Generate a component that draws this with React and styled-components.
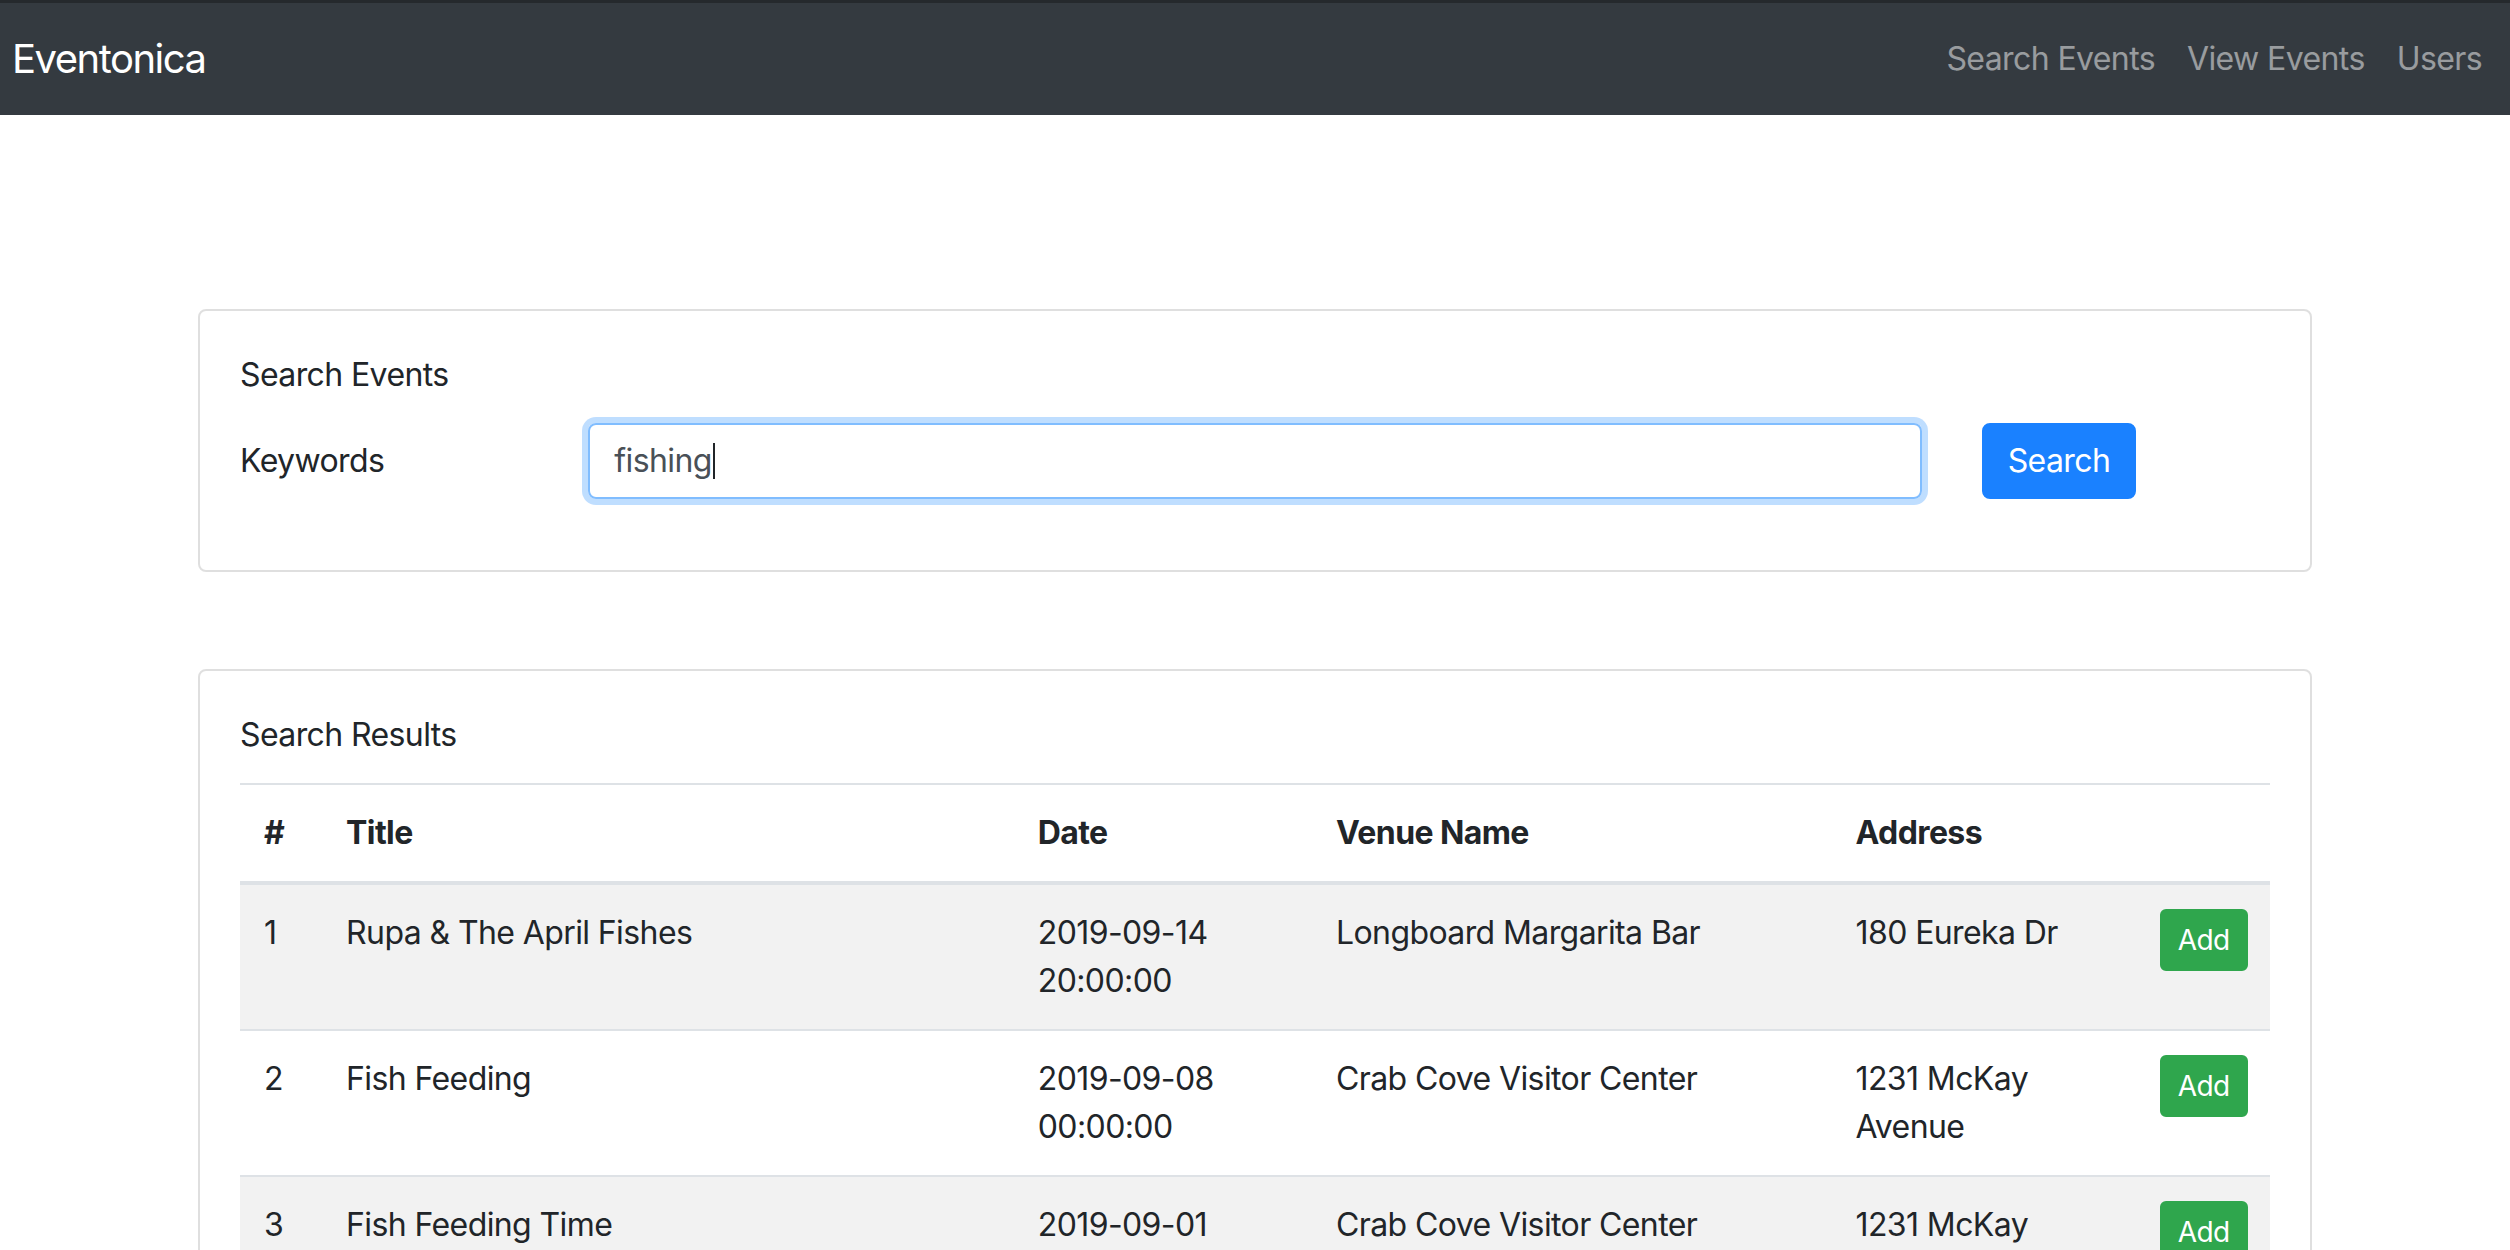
import { styled, createGlobalStyle } from 'styled-components';

const GlobalStyle = createGlobalStyle`
  * { box-sizing: border-box; }
  body {
    margin: 0;
    font-family: Inter, "Noto Sans", "Liberation Sans", sans-serif;
    font-size: 32px;
    line-height: 48px;
    letter-spacing: -0.6px;
    color: #212529;
    background: #fff;
  }
`

const Navbar = styled.nav`
  display: flex;
  align-items: center;
  justify-content: space-between;
  height: 115px;
  padding: 0 12px;
  background: #343a40;
  border-top: 3px solid #25292d;
`
const Brand = styled.a`
  color: #fff;
  font-size: 40px;
  line-height: 60px;
  letter-spacing: -1.5px;
  text-decoration: none;
`
const NavLinks = styled.div`
  display: flex;
`
const NavLink = styled.a`
  padding: 0 16px;
  color: rgba(255, 255, 255, 0.5);
  text-decoration: none;
  white-space: nowrap;
`

const Main = styled.main`
  width: 2114px;
  margin: 194px auto 0;
`
const Card = styled.section`
  border: 2px solid rgba(0, 0, 0, 0.125);
  border-radius: 8px;
  padding: 40px;
  margin-bottom: 97px;
`
const CardTitle = styled.h5`
  margin: 0 0 24px;
  font-size: 32px;
  font-weight: 400;
  line-height: 48px;
`

const FormRow = styled.div`
  display: flex;
  align-items: center;
  margin: 0 -30px 31px;
`
const Col = styled.div`
  flex: 0 0 ${p => p.$span / 12 * 100}%;
  padding: 0 30px;
`
const Label = styled.label`
  display: block;
`
const Field = styled.div`
  display: flex;
  align-items: center;
  height: 76px;
  padding: 0 24px;
  border: 2px solid #80bdff;
  border-radius: 8px;
  color: #495057;
  box-shadow: 0 0 0 6px rgba(0, 123, 255, 0.25);
`
const Caret = styled.span`
  display: inline-block;
  width: 2px;
  height: 36px;
  margin-left: 1px;
  background: #212529;
`
const Button = styled.button`
  font-family: inherit;
  letter-spacing: inherit;
  color: #fff;
  border: 2px solid ${p => p.$bg};
  background: ${p => p.$bg};
  border-radius: ${p => (p.$small ? '6px' : '8px')};
  font-size: ${p => (p.$small ? '28px' : '32px')};
  line-height: ${p => (p.$small ? '42px' : '48px')};
  padding: ${p => (p.$small ? '8px 16px' : '12px 24px')};
  cursor: pointer;
`

const Table = styled.table`
  width: 100%;
  border-collapse: collapse;
  table-layout: fixed;
`
const Th = styled.th`
  padding: 24px;
  text-align: left;
  font-weight: 700;
  vertical-align: bottom;
  border-top: 2px solid #dee2e6;
  border-bottom: 4px solid #dee2e6;
`
const Row = styled.tr`
  background: ${p => (p.$odd ? '#f2f2f2' : 'transparent')};
`
const Td = styled.td`
  padding: 24px;
  vertical-align: top;
  border-top: 2px solid #dee2e6;
`

const events = [
  { id: 1, title: 'Rupa & The April Fishes', date: '2019-09-14 20:00:00', venue: 'Longboard Margarita Bar', address: '180 Eureka Dr' },
  { id: 2, title: 'Fish Feeding', date: '2019-09-08 00:00:00', venue: 'Crab Cove Visitor Center', address: '1231 McKay Avenue' },
  { id: 3, title: 'Fish Feeding Time', date: '2019-09-01 00:00:00', venue: 'Crab Cove Visitor Center', address: '1231 McKay Avenue' },
]

const widths = [82, 691, 298, 519, 304, 134]

const App = () => {
  return (
    <>
      <GlobalStyle />
      <Navbar>
        <Brand href="#">Eventonica</Brand>
        <NavLinks>
          <NavLink href="#">Search Events</NavLink>
          <NavLink href="#">View Events</NavLink>
          <NavLink href="#">Users</NavLink>
        </NavLinks>
      </Navbar>
      <Main>
        <Card>
          <CardTitle>Search Events</CardTitle>
          <FormRow>
            <Col $span={2}><Label>Keywords</Label></Col>
            <Col $span={8}>
              <Field>fishing<Caret /></Field>
            </Col>
            <Col $span={2}>
              <Button $bg="#1a81ff">Search</Button>
            </Col>
          </FormRow>
        </Card>
        <Card>
          <CardTitle>Search Results</CardTitle>
          <Table>
            <colgroup>
              {widths.map((w, i) => <col key={i} style={{ width: w }} />)}
            </colgroup>
            <thead>
              <tr>
                <Th>#</Th>
                <Th>Title</Th>
                <Th>Date</Th>
                <Th>Venue Name</Th>
                <Th>Address</Th>
                <Th></Th>
              </tr>
            </thead>
            <tbody>
              {events.map((ev, i) => (
                <Row key={ev.id} $odd={i % 2 === 0}>
                  <Td>{ev.id}</Td>
                  <Td>{ev.title}</Td>
                  <Td>{ev.date}</Td>
                  <Td>{ev.venue}</Td>
                  <Td>{ev.address}</Td>
                  <Td><Button $small $bg="#2fa64d">Add</Button></Td>
                </Row>
              ))}
            </tbody>
          </Table>
        </Card>
      </Main>
    </>
  )
}

export default App
